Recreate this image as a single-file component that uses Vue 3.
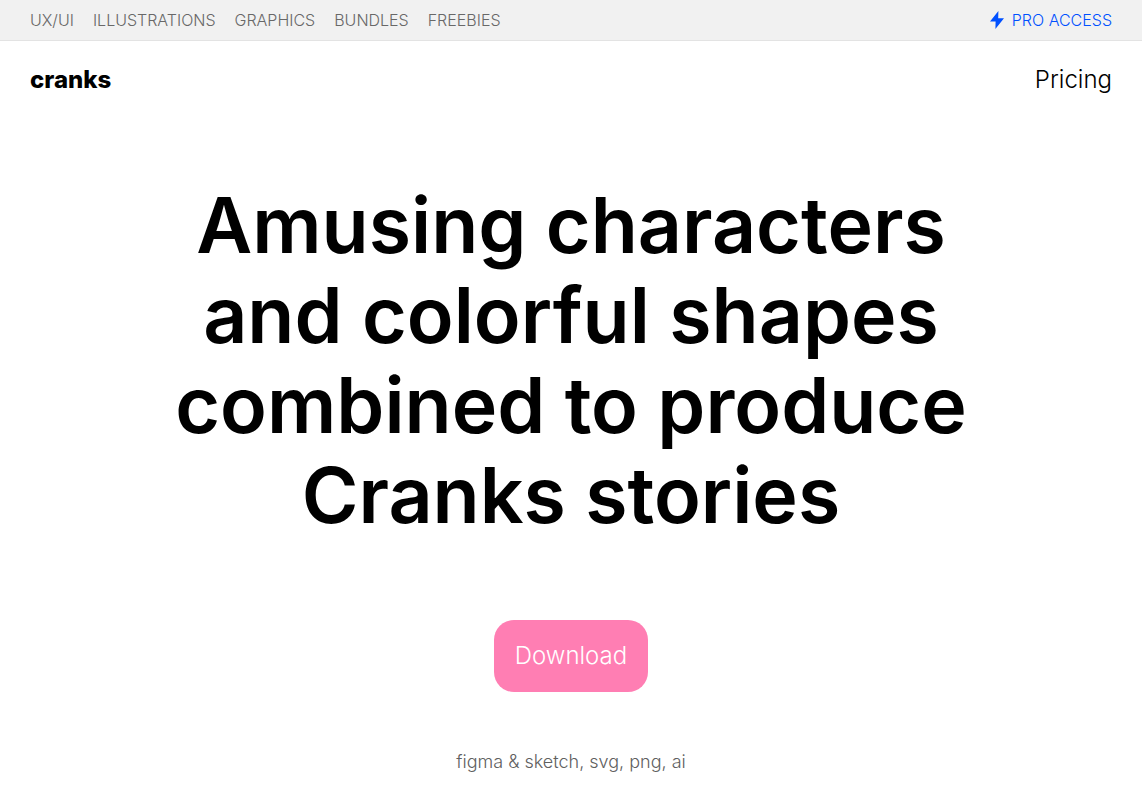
<script setup>
const categories = ['UX/UI', 'ILLUSTRATIONS', 'GRAPHICS', 'BUNDLES', 'FREEBIES']
</script>

<template>
  <div class="page">
    <nav class="topbar">
      <ul class="categories">
        <li v-for="name in categories" :key="name"><a href="#">{{ name }}</a></li>
      </ul>
      <a class="pro" href="#">
        <svg class="bolt" viewBox="0 0 14 18" aria-hidden="true">
          <path d="M8.4 0 0 10.5h5.6L5.4 18 14 7.3H8.2z" fill="currentColor" />
        </svg>
        <span>PRO ACCESS</span>
      </a>
    </nav>
    <header class="header">
      <a class="logo" href="#">cranks</a>
      <a class="pricing" href="#">Pricing</a>
    </header>
    <main class="hero">
      <h1>Amusing characters<br />and colorful shapes<br />combined to produce<br />Cranks stories</h1>
      <button class="download" type="button">Download</button>
      <p class="formats">figma &amp; sketch, svg, png, ai</p>
    </main>
  </div>
</template>

<style>
body {
  margin: 0;
  background: #fff;
}
</style>

<style scoped>
.page {
  font-family: Inter, "Liberation Sans", sans-serif;
  color: #000;
}
a {
  color: inherit;
  text-decoration: none;
}
.topbar {
  box-sizing: border-box;
  height: 41px;
  padding: 0 30px;
  display: flex;
  align-items: center;
  justify-content: space-between;
  background: #f1f1f1;
  border-bottom: 1px solid #e3e3e3;
  font-size: 16px;
  line-height: 20px;
  font-weight: 300;
  color: #686868;
}
.categories {
  display: flex;
  gap: 19px;
  margin: 0;
  padding: 0;
  list-style: none;
}
.pro {
  display: flex;
  align-items: center;
  gap: 8px;
  color: #0050ff;
}
.bolt {
  width: 14px;
  height: 18px;
}
.header {
  display: flex;
  align-items: center;
  justify-content: space-between;
  padding: 24px 30px;
  font-size: 24px;
  line-height: 30px;
}
.logo {
  font-weight: 800;
}
.pricing {
  font-weight: 300;
}
.hero {
  display: flex;
  flex-direction: column;
  align-items: center;
  padding: 61px 30px 18px;
  text-align: center;
}
h1 {
  margin: 0;
  font-size: 77px;
  line-height: 90px;
  font-weight: 600;
}
.download {
  margin: 80px 0 0;
  padding: 21px;
  border: 0;
  border-radius: 20px;
  background: #ff7eb3;
  color: #fff;
  font-family: inherit;
  font-size: 24px;
  line-height: 30px;
  font-weight: 300;
  cursor: pointer;
}
.formats {
  margin: 58px 0 0;
  font-size: 18px;
  line-height: 24px;
  font-weight: 300;
  color: #606060;
}
</style>
